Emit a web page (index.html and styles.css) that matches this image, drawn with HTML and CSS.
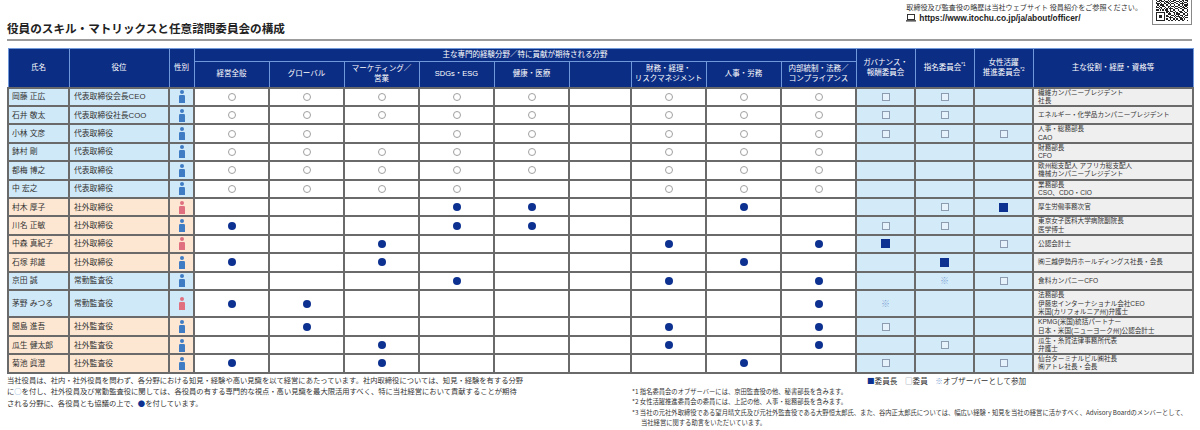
FILE: index.html
```html
<!DOCTYPE html>
<html lang="ja">
<head>
<meta charset="utf-8">
<title>役員のスキル・マトリックスと任意諮問委員会の構成</title>
<link rel="stylesheet" href="styles.css">
</head>
<body>
<svg class="defs" aria-hidden="true">
  <symbol id="person" viewBox="0 0 6 13">
    <circle cx="3" cy="2" r="2"/>
    <path d="M0 6.3Q0 5 1.3 5H4.7Q6 5 6 6.3V13H0Z"/>
  </symbol>
</svg>
<div class="page">
  <header class="top">
    <h1 class="title">役員のスキル・マトリックスと任意諮問委員会の構成</h1>
    <div class="info">
      <div class="info-text">
        <p class="note">取締役及び監査役の略歴は当社ウェブサイト 役員紹介をご参照ください。</p>
        <p class="url"><svg class="pc" viewBox="0 0 10 8" width="10" height="8"><rect x="1.5" y="0.5" width="7" height="5" fill="none" stroke="#333" stroke-width="1"/><rect x="0" y="6.2" width="10" height="1.3" fill="#333"/></svg>https://www.itochu.co.jp/ja/about/officer/</p>
      </div>
      <div class="qr">
        <svg viewBox="0 0 25 25" width="32" height="32" shape-rendering="crispEdges">
          <path fill="#222" fill-rule="evenodd" d="M0 0h7v7h-7zM1 1v5h5v-5zM18 0h7v7h-7zM19 1v5h5v-5zM0 18h7v7h-7zM1 19v5h5v-5z"/>
          <path fill="#222" d="M2 2h3v3h-3zM20 2h3v3h-3zM2 20h3v3h-3z
          M8 0h1v1h-1zM10 0h2v1h-2zM14 0h1v1h-1zM16 0h1v1h-1z
          M9 1h2v1h-2zM13 1h1v1h-1zM15 1h2v1h-2z
          M8 2h1v1h-1zM11 2h2v1h-2zM14 2h3v1h-3z
          M8 3h2v1h-2zM12 3h1v1h-1zM15 3h1v1h-1z
          M10 4h2v1h-2zM13 4h2v1h-2zM16 4h1v1h-1z
          M8 5h1v1h-1zM10 5h1v1h-1zM12 5h1v1h-1zM14 5h1v1h-1zM16 5h1v1h-1z
          M9 6h1v1h-1zM11 6h3v1h-3zM15 6h1v1h-1z
          M0 8h1v1h-1zM2 8h3v1h-3zM6 8h1v1h-1zM9 8h1v1h-1zM11 8h1v1h-1zM13 8h3v1h-3zM18 8h1v1h-1zM20 8h2v1h-2zM23 8h2v1h-2z
          M1 9h2v1h-2zM4 9h2v1h-2zM7 9h2v1h-2zM10 9h1v1h-1zM12 9h2v1h-2zM16 9h2v1h-2zM19 9h1v1h-1zM21 9h1v1h-1zM24 9h1v1h-1z
          M0 10h1v1h-1zM3 10h1v1h-1zM6 10h1v1h-1zM8 10h2v1h-2zM11 10h1v1h-1zM14 10h2v1h-2zM18 10h1v1h-1zM20 10h1v1h-1zM22 10h2v1h-2z
          M0 11h3v1h-3zM4 11h1v1h-1zM6 11h2v1h-2zM9 11h2v1h-2zM12 11h2v1h-2zM16 11h1v1h-1zM19 11h3v1h-3zM24 11h1v1h-1z
          M1 12h1v1h-1zM3 12h3v1h-3zM8 12h1v1h-1zM11 12h1v1h-1zM14 12h1v1h-1zM17 12h2v1h-2zM20 12h1v1h-1zM22 12h3v1h-3z
          M0 13h1v1h-1zM2 13h1v1h-1zM5 13h2v1h-2zM9 13h2v1h-2zM12 13h2v1h-2zM15 13h2v1h-2zM19 13h1v1h-1zM21 13h1v1h-1zM23 13h1v1h-1z
          M0 14h2v1h-2zM3 14h2v1h-2zM7 14h1v1h-1zM9 14h1v1h-1zM11 14h1v1h-1zM14 14h1v1h-1zM17 14h2v1h-2zM20 14h3v1h-3zM24 14h1v1h-1z
          M2 15h1v1h-1zM4 15h1v1h-1zM6 15h1v1h-1zM8 15h1v1h-1zM10 15h3v1h-3zM15 15h2v1h-2zM19 15h1v1h-1zM22 15h2v1h-2z
          M0 16h2v1h-2zM3 16h1v1h-1zM5 16h1v1h-1zM7 16h2v1h-2zM11 16h1v1h-1zM13 16h2v1h-2zM17 16h1v1h-1zM20 16h2v1h-2zM24 16h1v1h-1z
          M8 17h2v1h-2zM11 17h2v1h-2zM15 17h1v1h-1zM18 17h2v1h-2zM22 17h1v1h-1zM24 17h1v1h-1z
          M8 18h1v1h-1zM10 18h1v1h-1zM13 18h2v1h-2zM16 18h1v1h-1zM19 18h2v1h-2zM23 18h1v1h-1z
          M9 19h3v1h-3zM14 19h1v1h-1zM16 19h3v1h-3zM21 19h2v1h-2zM24 19h1v1h-1z
          M8 20h1v1h-1zM12 20h2v1h-2zM15 20h1v1h-1zM17 20h1v1h-1zM19 20h2v1h-2zM23 20h2v1h-2z
          M8 21h2v1h-2zM11 21h1v1h-1zM14 21h1v1h-1zM16 21h3v1h-3zM20 21h1v1h-1zM22 21h1v1h-1z
          M10 22h3v1h-3zM15 22h1v1h-1zM18 22h2v1h-2zM21 22h1v1h-1zM23 22h2v1h-2z
          M8 23h1v1h-1zM11 23h1v1h-1zM13 23h2v1h-2zM16 23h1v1h-1zM19 23h2v1h-2zM22 23h1v1h-1z
          M9 24h2v1h-2zM12 24h1v1h-1zM15 24h1v1h-1zM17 24h2v1h-2zM20 24h2v1h-2zM24 24h1v1h-1z"/>
        </svg>
      </div>
    </div>
  </header>
  <div class="rule"></div>

  <table class="matrix">
    <colgroup>
      <col class="w-name"><col class="w-pos"><col class="w-sex">
      <col class="w-sk"><col class="w-sk"><col class="w-sk"><col class="w-sk"><col class="w-sk">
      <col class="w-blank"><col class="w-sk"><col class="w-sk"><col class="w-sk">
      <col class="w-cm"><col class="w-cm"><col class="w-cm"><col class="w-bio">
    </colgroup>
    <thead>
      <tr class="h1">
        <th rowspan="2">氏名</th>
        <th rowspan="2">役位</th>
        <th rowspan="2">性別</th>
        <th colspan="9">主な専門的経験分野／特に貢献が期待される分野</th>
        <th rowspan="2">ガバナンス・<br>報酬委員会</th>
        <th rowspan="2">指名委員会<sup>*1</sup></th>
        <th rowspan="2">女性活躍<br>推進委員会<sup>*2</sup></th>
        <th rowspan="2">主な役割・経歴・資格等</th>
      </tr>
      <tr class="h2">
        <th>経営全般</th>
        <th>グローバル</th>
        <th>マーケティング／<br>営業</th>
        <th>SDGs・ESG</th>
        <th>健康・医療</th>
        <th></th>
        <th>財務・経理・<br>リスクマネジメント</th>
        <th>人事・労務</th>
        <th>内部統制・法務／<br>コンプライアンス</th>
      </tr>
    </thead>
    <tbody>
      <tr class="in">
        <td class="nm">岡藤 正広</td><td class="pos">代表取締役会長CEO</td><td class="sex m"><svg><use href="#person"/></svg></td>
        <td class="sk"><i class="o"></i></td><td class="sk"><i class="o"></i></td><td class="sk"><i class="o"></i></td><td class="sk"><i class="o"></i></td><td class="sk"><i class="o"></i></td><td class="sk"></td><td class="sk"><i class="o"></i></td><td class="sk"><i class="o"></i></td><td class="sk"><i class="o"></i></td>
        <td class="cm"><i class="sq"></i></td><td class="cm"><i class="sq"></i></td><td class="cm"></td>
        <td class="bio">繊維カンパニープレジデント<br>社長</td>
      </tr>
      <tr class="in">
        <td class="nm">石井 敬太</td><td class="pos">代表取締役社長COO</td><td class="sex m"><svg><use href="#person"/></svg></td>
        <td class="sk"><i class="o"></i></td><td class="sk"><i class="o"></i></td><td class="sk"><i class="o"></i></td><td class="sk"><i class="o"></i></td><td class="sk"><i class="o"></i></td><td class="sk"></td><td class="sk"><i class="o"></i></td><td class="sk"><i class="o"></i></td><td class="sk"><i class="o"></i></td>
        <td class="cm"><i class="sq"></i></td><td class="cm"><i class="sq"></i></td><td class="cm"></td>
        <td class="bio">エネルギー・化学品カンパニープレジデント</td>
      </tr>
      <tr class="in">
        <td class="nm">小林 文彦</td><td class="pos">代表取締役</td><td class="sex m"><svg><use href="#person"/></svg></td>
        <td class="sk"><i class="o"></i></td><td class="sk"><i class="o"></i></td><td class="sk"></td><td class="sk"><i class="o"></i></td><td class="sk"><i class="o"></i></td><td class="sk"></td><td class="sk"><i class="o"></i></td><td class="sk"><i class="o"></i></td><td class="sk"><i class="o"></i></td>
        <td class="cm"><i class="sq"></i></td><td class="cm"><i class="sq"></i></td><td class="cm"><i class="sq"></i></td>
        <td class="bio">人事・総務部長<br>CAO</td>
      </tr>
      <tr class="in">
        <td class="nm">鉢村 剛</td><td class="pos">代表取締役</td><td class="sex m"><svg><use href="#person"/></svg></td>
        <td class="sk"><i class="o"></i></td><td class="sk"><i class="o"></i></td><td class="sk"><i class="o"></i></td><td class="sk"><i class="o"></i></td><td class="sk"><i class="o"></i></td><td class="sk"></td><td class="sk"><i class="o"></i></td><td class="sk"><i class="o"></i></td><td class="sk"><i class="o"></i></td>
        <td class="cm"></td><td class="cm"></td><td class="cm"></td>
        <td class="bio">財務部長<br>CFO</td>
      </tr>
      <tr class="in">
        <td class="nm">都梅 博之</td><td class="pos">代表取締役</td><td class="sex m"><svg><use href="#person"/></svg></td>
        <td class="sk"><i class="o"></i></td><td class="sk"><i class="o"></i></td><td class="sk"><i class="o"></i></td><td class="sk"><i class="o"></i></td><td class="sk"><i class="o"></i></td><td class="sk"></td><td class="sk"><i class="o"></i></td><td class="sk"><i class="o"></i></td><td class="sk"><i class="o"></i></td>
        <td class="cm"></td><td class="cm"></td><td class="cm"></td>
        <td class="bio">欧州総支配人 アフリカ総支配人<br>機械カンパニープレジデント</td>
      </tr>
      <tr class="in">
        <td class="nm">中 宏之</td><td class="pos">代表取締役</td><td class="sex m"><svg><use href="#person"/></svg></td>
        <td class="sk"><i class="o"></i></td><td class="sk"><i class="o"></i></td><td class="sk"><i class="o"></i></td><td class="sk"><i class="o"></i></td><td class="sk"></td><td class="sk"></td><td class="sk"><i class="o"></i></td><td class="sk"><i class="o"></i></td><td class="sk"><i class="o"></i></td>
        <td class="cm"></td><td class="cm"></td><td class="cm"></td>
        <td class="bio">業務部長<br>CSO、CDO・CIO</td>
      </tr>
      <tr class="out">
        <td class="nm">村木 厚子</td><td class="pos">社外取締役</td><td class="sex f"><svg><use href="#person"/></svg></td>
        <td class="sk"></td><td class="sk"></td><td class="sk"></td><td class="sk"><i class="d"></i></td><td class="sk"><i class="d"></i></td><td class="sk"></td><td class="sk"></td><td class="sk"><i class="d"></i></td><td class="sk"></td>
        <td class="cm"></td><td class="cm"><i class="sq"></i></td><td class="cm"><i class="sqf"></i></td>
        <td class="bio">厚生労働事務次官</td>
      </tr>
      <tr class="out">
        <td class="nm">川名 正敏</td><td class="pos">社外取締役</td><td class="sex m"><svg><use href="#person"/></svg></td>
        <td class="sk"><i class="d"></i></td><td class="sk"></td><td class="sk"></td><td class="sk"><i class="d"></i></td><td class="sk"><i class="d"></i></td><td class="sk"></td><td class="sk"></td><td class="sk"></td><td class="sk"></td>
        <td class="cm"><i class="sq"></i></td><td class="cm"><i class="sq"></i></td><td class="cm"></td>
        <td class="bio">東京女子医科大学病院副院長<br>医学博士</td>
      </tr>
      <tr class="out">
        <td class="nm">中森 真紀子</td><td class="pos">社外取締役</td><td class="sex f"><svg><use href="#person"/></svg></td>
        <td class="sk"></td><td class="sk"></td><td class="sk"><i class="d"></i></td><td class="sk"></td><td class="sk"></td><td class="sk"></td><td class="sk"><i class="d"></i></td><td class="sk"></td><td class="sk"><i class="d"></i></td>
        <td class="cm"><i class="sqf"></i></td><td class="cm"></td><td class="cm"><i class="sq"></i></td>
        <td class="bio">公認会計士</td>
      </tr>
      <tr class="out">
        <td class="nm">石塚 邦雄</td><td class="pos">社外取締役</td><td class="sex m"><svg><use href="#person"/></svg></td>
        <td class="sk"><i class="d"></i></td><td class="sk"></td><td class="sk"><i class="d"></i></td><td class="sk"></td><td class="sk"></td><td class="sk"></td><td class="sk"></td><td class="sk"><i class="d"></i></td><td class="sk"></td>
        <td class="cm"></td><td class="cm"><i class="sqf"></i></td><td class="cm"></td>
        <td class="bio">㈱三越伊勢丹ホールディングス社長・会長</td>
      </tr>
      <tr class="in">
        <td class="nm">京田 誠</td><td class="pos">常勤監査役</td><td class="sex m"><svg><use href="#person"/></svg></td>
        <td class="sk"></td><td class="sk"></td><td class="sk"></td><td class="sk"><i class="d"></i></td><td class="sk"></td><td class="sk"></td><td class="sk"><i class="d"></i></td><td class="sk"></td><td class="sk"><i class="d"></i></td>
        <td class="cm"></td><td class="cm"><span class="obs">※</span></td><td class="cm"><i class="sq"></i></td>
        <td class="bio">食料カンパニーCFO</td>
      </tr>
      <tr class="in tall">
        <td class="nm">茅野 みつる</td><td class="pos">常勤監査役</td><td class="sex f"><svg><use href="#person"/></svg></td>
        <td class="sk"><i class="d"></i></td><td class="sk"><i class="d"></i></td><td class="sk"></td><td class="sk"></td><td class="sk"></td><td class="sk"></td><td class="sk"></td><td class="sk"></td><td class="sk"><i class="d"></i></td>
        <td class="cm"><span class="obs">※</span></td><td class="cm"></td><td class="cm"></td>
        <td class="bio">法務部長<br>伊藤忠インターナショナル会社CEO<br>米国(カリフォルニア州)弁護士</td>
      </tr>
      <tr class="out">
        <td class="nm">間島 進吾</td><td class="pos">社外監査役</td><td class="sex m"><svg><use href="#person"/></svg></td>
        <td class="sk"></td><td class="sk"><i class="d"></i></td><td class="sk"></td><td class="sk"></td><td class="sk"></td><td class="sk"></td><td class="sk"><i class="d"></i></td><td class="sk"></td><td class="sk"><i class="d"></i></td>
        <td class="cm"><i class="sq"></i></td><td class="cm"></td><td class="cm"></td>
        <td class="bio">KPMG(米国)統括パートナー<br>日本・米国(ニューヨーク州)公認会計士</td>
      </tr>
      <tr class="out">
        <td class="nm">瓜生 健太郎</td><td class="pos">社外監査役</td><td class="sex m"><svg><use href="#person"/></svg></td>
        <td class="sk"></td><td class="sk"></td><td class="sk"><i class="d"></i></td><td class="sk"></td><td class="sk"></td><td class="sk"></td><td class="sk"><i class="d"></i></td><td class="sk"></td><td class="sk"><i class="d"></i></td>
        <td class="cm"></td><td class="cm"><i class="sq"></i></td><td class="cm"></td>
        <td class="bio">瓜生・糸賀法律事務所代表<br>弁護士</td>
      </tr>
      <tr class="out">
        <td class="nm">菊池 眞澄</td><td class="pos">社外監査役</td><td class="sex m"><svg><use href="#person"/></svg></td>
        <td class="sk"><i class="d"></i></td><td class="sk"></td><td class="sk"><i class="d"></i></td><td class="sk"></td><td class="sk"></td><td class="sk"></td><td class="sk"></td><td class="sk"><i class="d"></i></td><td class="sk"></td>
        <td class="cm"><i class="sq"></i></td><td class="cm"></td><td class="cm"><i class="sq"></i></td>
        <td class="bio">仙台ターミナルビル㈱社長<br>㈱アトレ社長・会長</td>
      </tr>
    </tbody>
  </table>

  <footer class="notes">
    <p class="lead">当社役員は、社内・社外役員を問わず、各分野における知見・経験や高い見識を以て経営にあたっています。社内取締役については、知見・経験を有する分野<br>に<span class="lo">○</span>を付し、社外役員及び常勤監査役に関しては、各役員の有する専門的な視点・高い見識を最大限活用すべく、特に当社経営において貢献することが期待<br>される分野に、各役員とも協議の上で、<span class="ld">●</span>を付しています。</p>
    <div class="side">
      <p class="legend"><span class="lg-f">■</span>委員長　<span class="lg-e">□</span>委員　<span class="lg-o">※</span>オブザーバーとして参加</p>
      <ol class="fn">
        <li>*1 指名委員会のオブザーバーには、京田監査役の他、秘書部長を含みます。</li>
        <li>*2 女性活躍推進委員会の委員には、上記の他、人事・総務部長を含みます。</li>
        <li>*3 当社の元社外取締役である望月晴文氏及び元社外監査役である大野恒太郎氏、また、谷内正太郎氏については、幅広い経験・知見を当社の経営に活かすべく、Advisory Boardのメンバーとして、<br>当社経営に関する助言をいただいています。</li>
      </ol>
    </div>
  </footer>
</div>
</body>
</html>
```

FILE: styles.css
```css
* {
  box-sizing: border-box;
  margin: 0;
  padding: 0;
}

body {
  margin: 0;
  background: #fff;
  color: #333;
  font-family: "Liberation Sans", "Noto Sans CJK JP", sans-serif;
  overflow: hidden;
}

.defs {
  position: absolute;
  width: 0;
  height: 0;
  overflow: hidden;
}

.page {
  width: 1200px;
  padding: 0 8px 0 7px;
}

/* ---------- top ---------- */
.top {
  display: flex;
  align-items: flex-start;
  height: 39px;
}

.title {
  font-family: "Noto Sans CJK JP", sans-serif;
  font-size: 11.6px;
  font-weight: 700;
  line-height: 14px;
  padding-top: 21px;
  color: #222;
}

.info {
  margin-left: auto;
  display: flex;
  align-items: flex-start;
  gap: 10px;
}

.info-text {
  padding-top: 2px;
}

.note {
  font-family: "Noto Sans CJK JP", sans-serif;
  font-size: 7.1px;
  line-height: 10px;
  color: #333;
}

.url {
  display: flex;
  align-items: center;
  gap: 3px;
  font-size: 8.4px;
  line-height: 12px;
  font-weight: 700;
  color: #222;
}

.pc {
  display: block;
}

.qr {
  width: 40px;
  height: 40px;
  margin-top: -15px;
  border: 1px solid #888;
  padding: 3px;
  background: #fff;
}

.qr svg {
  display: block;
}

.rule {
  height: 2px;
  background: #9c9c9c;
}

/* ---------- table ---------- */
.matrix {
  margin-top: 7px;
  width: 1185px;
  border-collapse: collapse;
  table-layout: fixed;
  font-family: "Liberation Sans", "Noto Sans CJK JP", sans-serif;
}

.w-name { width: 61px; }
.w-pos { width: 100px; }
.w-sex { width: 25px; }
.w-sk { width: 75px; }
.w-blank { width: 62px; }
.w-cm { width: 59px; }
.w-bio { width: 160px; }

.matrix th {
  background: #0c2d84;
  color: #fff;
  font-weight: 400;
  font-size: 7.5px;
  line-height: 10px;
  border: 1px solid #6f99da;
  text-align: center;
  vertical-align: middle;
  padding: 0;
}

.matrix th sup {
  font-size: 4.5px;
  vertical-align: 4px;
  line-height: 0;
}

.h1 {
  height: 13px;
}

.h2 {
  height: 26px;
}

.matrix td {
  border: 2px solid #6a6a6a;
  padding: 0;
  font-size: 7.8px;
  line-height: 9px;
  color: #333;
  vertical-align: middle;
}

.matrix tbody tr {
  height: 18.4px;
}

.matrix tbody tr.tall {
  height: 27.5px;
}

.nm {
  padding-left: 3px !important;
}

.pos {
  padding-left: 4px !important;
}

.sex {
  text-align: center;
  line-height: 0 !important;
}

.sex svg {
  display: block;
  width: 6px;
  height: 13px;
  margin: 0 auto;
}

.sex.m svg { fill: #3f7cc4; }
.sex.f svg { fill: #e0707f; }

.in .nm, .in .pos, .in .sex { background: #d0e9f8; }
.out .nm, .out .pos, .out .sex { background: #fde7d2; }

.sk, .cm {
  text-align: center;
  line-height: 0 !important;
}

.sk { background: #fff; }
.cm { background: #d3ebf9; }

.o, .d, .sq, .sqf {
  display: inline-block;
  vertical-align: middle;
}

.o {
  width: 8px;
  height: 8px;
  border: 1px solid #a0a0a0;
  border-radius: 50%;
}

.d {
  width: 8px;
  height: 8px;
  border-radius: 50%;
  background: #0d3190;
}

.sq {
  width: 8px;
  height: 8px;
  border: 1px solid #8e9cb2;
  background: #e6f2fb;
}

.sqf {
  width: 9px;
  height: 9px;
  background: #0d3190;
}

.obs {
  display: inline-block;
  font-family: "Noto Sans CJK JP", sans-serif;
  font-size: 9px;
  line-height: 10px;
  color: #7ea3d3;
}

.bio {
  background: #efefef;
  padding-left: 4px !important;
  font-family: "Liberation Sans", "Noto Sans CJK JP", sans-serif;
  font-size: 6.6px !important;
  line-height: 8.2px !important;
  text-align: left;
}

/* ---------- notes ---------- */
.notes {
  display: flex;
  padding-top: 1px;
  font-family: "Noto Sans CJK JP", sans-serif;
  color: #333;
}

.lead {
  width: 625px;
  flex: none;
  font-size: 7.3px;
  line-height: 11.5px;
  white-space: nowrap;
}

.lo { color: #6d9ad2; }
.ld { color: #0d3190; }

.side {
  flex: 1;
  min-width: 0;
}

.legend {
  padding-left: 235px;
  font-size: 7.6px;
  line-height: 12px;
}

.lg-f { color: #0d3190; }
.lg-e { color: #6b7b94; }
.lg-o { color: #7ea3d3; }

.fn {
  list-style: none;
  font-size: 6.3px;
  line-height: 10.6px;
  white-space: nowrap;
}

.fn li {
  padding-left: 9px;
  text-indent: -9px;
}
```
